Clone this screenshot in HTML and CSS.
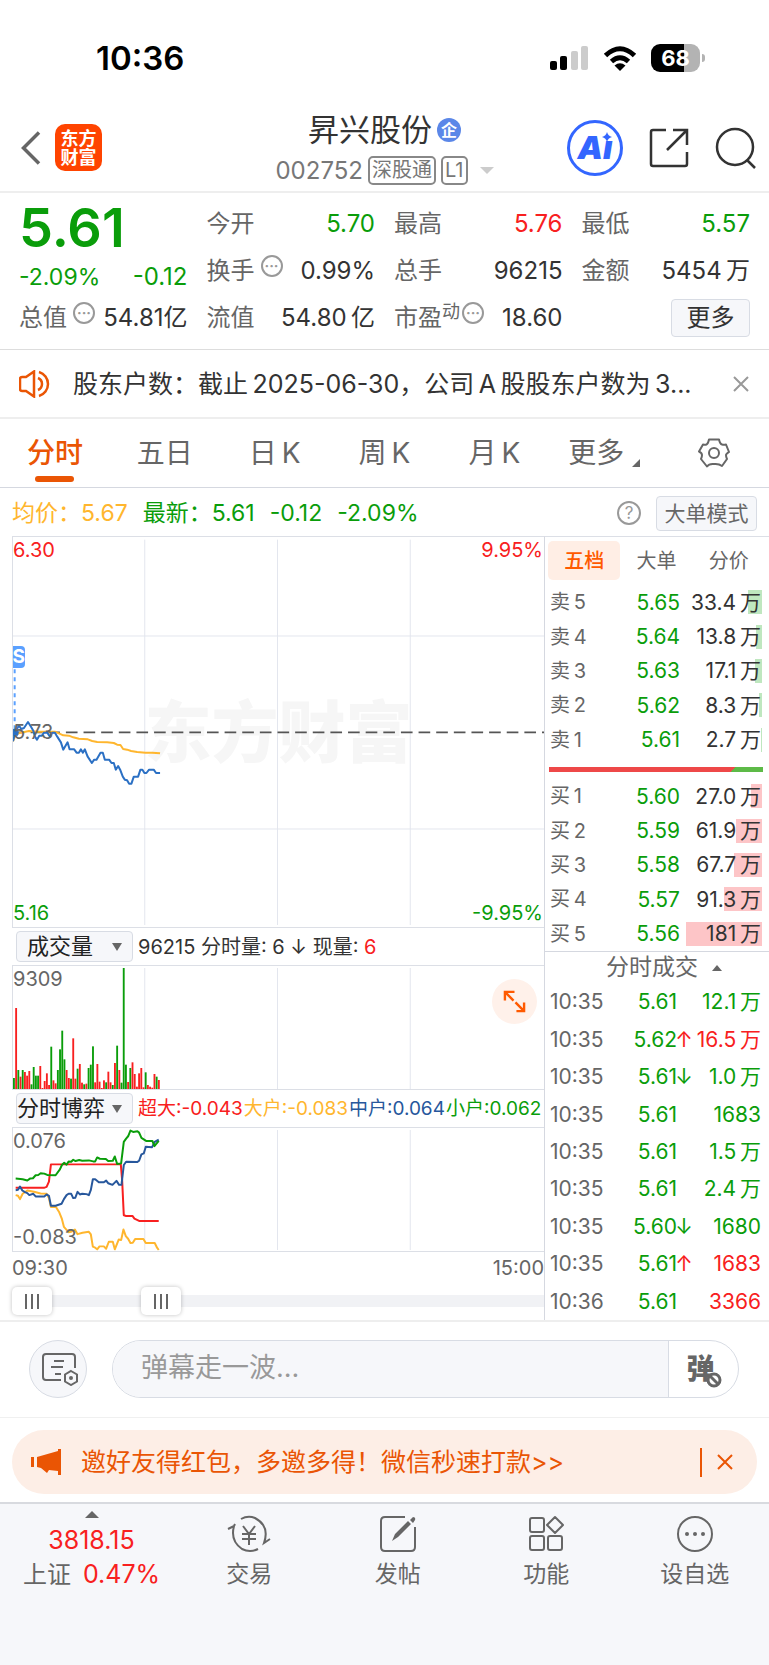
FILE: index.html
```html
<!DOCTYPE html>
<html lang="zh-CN">
<head>
    <meta charset="UTF-8">
    <meta name="viewport" content="width=device-width, initial-scale=1.0">
    <title>昇兴股份 002752</title>
    <link rel="stylesheet" href="styles.css">
</head>
<body>
    <div class="status-bar">
        <span class="clock">10:36</span>
        <div class="status-icons">
            <svg width="39" height="25" viewBox="0 0 39 25">
                <rect x="0" y="15" width="7" height="9" rx="2"/>
                <rect x="10" y="10" width="7" height="14" rx="2"/>
                <rect x="21" y="5" width="7" height="19" rx="2" fill="#ccc"/>
                <rect x="31" y="0" width="7" height="24" rx="2" fill="#ccc"/>
            </svg>
            <svg width="34" height="25" viewBox="0 0 34 25">
                <g fill="none" stroke="#000" stroke-width="5">
                    <path d="M2.5 9.5Q17-4 31.5 9.5"/>
                    <path d="M8.500 15.500Q17 8 25.500 15.500"/>
                </g>
                <path d="M17 25l-5.500-5.500q5.500-4.500 11 0z"/>
            </svg>
            <span class="battery">68</span>
        </div>
    </div>

    <header class="header">
        <div class="header-left">
            <button class="icon-btn" aria-label="返回">
                <svg width="20" height="34" viewBox="0 0 20 34" fill="none" stroke="#666" stroke-width="3.500"><path d="M18 1.500L2.500 17 18 32.500"/></svg>
            </button>
            <a class="logo" href="#">东方<br>财富</a>
        </div>
        <div class="title">
            <h1>昇兴股份<span class="badge">企</span></h1>
            <p>002752<span class="tag">深股通</span><span class="tag">L1</span><i class="caret-down"></i></p>
        </div>
        <div class="header-right">
            <button class="icon-btn ai" aria-label="Ai">
                <span>Aı</span>
                <svg class="spark" width="10" height="10" viewBox="0 0 10 10" fill="#3366ff"><path d="M5 0Q6 4 10 5Q6 6 5 10Q4 6 0 5Q4 4 5 0z"/></svg>
            </button>
            <button class="icon-btn" aria-label="分享">
                <svg width="40" height="40" viewBox="0 0 40 40" fill="none" stroke="#333" stroke-width="2.500"><path d="M17 2H4Q2 2 2 4V36Q2 38 4 38H36Q38 38 38 36V24M24 2H38V17M38 2L18 22"/></svg>
            </button>
            <button class="icon-btn" aria-label="搜索">
                <svg width="42" height="42" viewBox="0 0 42 42" fill="none" stroke="#333" stroke-width="2.500"><circle cx="20" cy="20" r="18"/><path d="M32 33l8 8"/></svg>
            </button>
        </div>
    </header>

    <section class="quote">
        <div class="quote-col">
            <div class="price">5.61</div>
            <div class="change"><span>-2.09%</span><b>-0.12</b></div>
            <div class="cell"><label>总值<i class="dots">···</i></label><b>54.81亿</b></div>
        </div>
        <div class="quote-col">
            <div class="cell"><label>今开</label><b class="green">5.70</b></div>
            <div class="cell"><label>换手<i class="dots">···</i></label><b>0.99%</b></div>
            <div class="cell"><label>流值</label><b>54.80&thinsp;亿</b></div>
        </div>
        <div class="quote-col">
            <div class="cell"><label>最高</label><b class="red">5.76</b></div>
            <div class="cell"><label>总手</label><b>96215</b></div>
            <div class="cell"><label>市盈<sup>动</sup><i class="dots">···</i></label><b>18.60</b></div>
        </div>
        <div class="quote-col">
            <div class="cell"><label>最低</label><b class="green">5.57</b></div>
            <div class="cell"><label>金额</label><b>5454&thinsp;万</b></div>
            <div class="cell end"><button class="more-btn">更多</button></div>
        </div>
    </section>

    <div class="news">
        <svg width="34" height="28" viewBox="0 0 34 28" fill="none" stroke="#ea5504" stroke-width="2.500"><path d="M15 1.500V26.500L7 21H3Q1 21 1 19V9Q1 7 3 7H7zM19 8a6.500 6.500 0 0 1 0 12M20 2a12.500 12.500 0 0 1 0 24"/></svg>
        <a href="#">股东户数：截止&thinsp;2025-06-30，公司&thinsp;A&thinsp;股股东户数为&thinsp;3...</a>
        <button class="icon-btn" aria-label="关闭">
            <svg width="16" height="16" viewBox="0 0 16 16" stroke="#999" stroke-width="2"><path d="M1 1l14 14M15 1L1 15"/></svg>
        </button>
    </div>

    <nav class="tabs">
        <button class="active">分时</button>
        <button>五日</button>
        <button>日&thinsp;K</button>
        <button>周&thinsp;K</button>
        <button>月&thinsp;K</button>
        <button>更多<i class="corner"></i></button>
        <button aria-label="设置">
            <svg width="32" height="30" viewBox="0 0 32 30" fill="none" stroke="#666" stroke-width="2" stroke-linejoin="round"><path d="M11 1.500H21Q22 6 24 6.500Q26 7 28 6.500L31 14Q28 16 28 17Q28 19 29 21L24 28Q21 25.500 16 26Q11 25.500 9 28.500L3 21Q4 19 4 17Q4 15 1 13.500L5 6.500Q7 7 8.500 6.500Q10 6 11 1.500z"/><circle cx="16" cy="15" r="5"/></svg>
        </button>
    </nav>

    <div class="info">
        <span class="orange">均价：5.67</span>
        <span class="green">最新：5.61</span>
        <span class="green">-0.12</span>
        <span class="green">-2.09%</span>
        <button class="help">?</button>
        <button class="mode">大单模式</button>
    </div>

    <main class="main">
        <section class="charts">
            <div class="chart price-chart">
                <div class="watermark">东方财富</div>
                <svg viewBox="0 0 1596 1170" preserveAspectRatio="none" fill="none">
                    <path stroke="#e3e6ee" stroke-width="3" d="M396 8V1164M795 8V1164M1194 8V1164M0 297H1596M0 876H1596"/>
                    <path stroke="#5aa0ff" stroke-width="6" stroke-dasharray="12 12" d="M5 397V580"/>
                    <path stroke="#555" stroke-width="5" stroke-dasharray="35 18" d="M0 586H1596"/>
                    <g transform="translate(-37 -19)" stroke-width="6" stroke-linejoin="round">
                        <polyline stroke="#ffb62e" points="37,632 45,612 60,606 85,601 110,603 163,603 175,608 188,614 205,615 218,620 235,624 262,626 275,631 290,634 320,635 340,637 350,642 360,643 368,655 380,657 392,661 410,664 435,666 455,666 479,668"/>
                        <polyline stroke="#2b70c4" points="37,632 45,600 55,585 62,595 70,592 82,574 92,590 98,600 103,618 109,627 116,615 124,615 130,606 140,606 148,618 155,606 163,606 170,618 181,635 188,657 201,635 207,656 221,656 228,666 235,666 241,656 247,666 253,656 261,677 274,697 281,687 288,687 300,666 307,666 313,687 326,687 333,697 340,697 346,717 353,706 359,717 367,738 373,747 380,749 386,759 393,759 400,738 413,738 420,717 426,717 432,727 438,727 446,717 460,717 467,727 479,727"/>
                        <circle cx="42" cy="606" r="12" fill="#2b70c4"/>
                    </g>
                </svg>
                <span class="sell-mark">S</span>
                <span class="label top-left red">6.30</span>
                <span class="label top-right red">9.95%</span>
                <span class="label mid-left">5.73</span>
                <span class="label bottom-left green">5.16</span>
                <span class="label bottom-right green">-9.95%</span>
            </div>

            <div class="sub-head">
                <select aria-label="指标一"><option>成交量</option></select>
                <p class="total">96215 分时量: 6 ↓ 现量: <span class="red">6</span></p>
            </div>
            <div class="chart sub-chart">
                <svg viewBox="0 0 1596 369" preserveAspectRatio="none">
                    <path stroke="#e3e6ee" stroke-width="3" d="M396 6V369M795 6V369M1194 6V369"/>
                    <g id="volume"></g>
                </svg>
                <span class="label top-left">9309</span>
                <button class="expand" aria-label="放大">
                    <svg width="24" height="24" viewBox="0 0 24 24" fill="none" stroke="#ff5a00" stroke-width="2.500"><path d="M2 11V2H12M2 2l9 9M14 22H22V13M22 22l-9-9"/></svg>
                </button>
            </div>

            <div class="sub-head">
                <select class="wide" aria-label="指标二"><option>分时博弈</option></select>
                <p class="flows"><span class="red">超大:-0.043</span><span class="orange">大户:-0.083</span><span class="blue">中户:0.064</span><span class="green">小户:0.062</span></p>
            </div>
            <div class="chart sub-chart">
                <svg viewBox="0 0 1596 372" preserveAspectRatio="none" fill="none">
                    <path stroke="#e3e6ee" stroke-width="3" d="M396 6V369M795 6V369M1194 6V369"/>
                    <g transform="translate(-37 -623)" stroke-width="6" stroke-linejoin="round">
                        <polyline stroke="#ffb62e" points="45,826 52,828 58,838 66,822 80,812 100,816 120,821 138,822 145,835 151,862 166,862 176,878 184,898 190,922 204,938 211,937 223,930 231,944 246,940 265,937 271,945 277,982 284,985 290,990 297,981 310,981 317,988 325,967 337,967 343,990 355,960 362,962 369,930 376,950 383,958 390,971 397,970 404,959 429,959 436,971 463,971 470,985 475,992"/>
                        <polyline stroke="#f82020" points="45,804 130,804 138,801 145,785 151,733 361,733 365,780 370,887 377,889 396,889 402,897 416,904 475,904"/>
                        <polyline stroke="#27579c" points="45,811 52,810 58,800 65,812 73,817 80,820 86,826 98,822 105,830 131,830 138,824 145,828 151,858 165,858 183,852 190,838 198,826 204,822 212,822 218,835 224,834 231,816 238,824 245,822 258,823 265,826 271,810 277,778 284,778 295,787 310,787 317,782 323,790 336,795 348,783 356,795 363,795 370,735 377,725 410,726 416,722 423,703 430,700 436,680 455,681 463,665 475,658"/>
                        <polyline stroke="#0a9d0a" points="45,776 66,778 80,782 88,776 97,775 105,766 113,765 120,760 131,761 140,765 165,766 178,748 184,735 191,728 198,734 204,724 212,725 218,719 225,723 236,720 245,722 265,721 278,724 284,724 290,712 298,716 316,717 323,723 337,722 343,709 350,732 362,730 370,665 377,655 383,648 390,631 398,635 411,633 416,637 423,653 437,662 456,662 462,678 475,662"/>
                    </g>
                </svg>
                <span class="label top-left">0.076</span>
                <span class="label bottom-left">-0.083</span>
            </div>
            <div class="times"><span>09:30</span><span>15:00</span></div>
            <div class="slider">
                <input type="range" min="0" max="1000" value="0" aria-label="开始时间">
                <input type="range" min="0" max="1000" value="262" aria-label="结束时间">
            </div>
        </section>

        <aside class="book">
            <div class="book-tabs">
                <button class="active">五档</button>
                <button>大单</button>
                <button>分价</button>
            </div>
            <table class="levels sell">
                <tr><th>卖&thinsp;5</th><td>5.65</td><td style="--w: 14px">33.4&thinsp;万</td></tr>
                <tr><th>卖&thinsp;4</th><td>5.64</td><td style="--w: 6px">13.8&thinsp;万</td></tr>
                <tr><th>卖&thinsp;3</th><td>5.63</td><td style="--w: 7px">17.1&thinsp;万</td></tr>
                <tr><th>卖&thinsp;2</th><td>5.62</td><td style="--w: 3px">8.3&thinsp;万</td></tr>
                <tr><th>卖&thinsp;1</th><td>5.61</td><td style="--w: 1px">2.7&thinsp;万</td></tr>
            </table>
            <div class="ratio"></div>
            <table class="levels buy">
                <tr><th>买&thinsp;1</th><td>5.60</td><td style="--w: 11px">27.0&thinsp;万</td></tr>
                <tr><th>买&thinsp;2</th><td>5.59</td><td style="--w: 26px">61.9&thinsp;万</td></tr>
                <tr><th>买&thinsp;3</th><td>5.58</td><td style="--w: 28px">67.7&thinsp;万</td></tr>
                <tr><th>买&thinsp;4</th><td>5.57</td><td style="--w: 38px">91.3&thinsp;万</td></tr>
                <tr><th>买&thinsp;5</th><td>5.56</td><td style="--w: 76px">181&thinsp;万</td></tr>
            </table>
            <button class="ticks-head">分时成交<i class="caret-up"></i></button>
            <table class="ticks">
                <tr><th>10:35</th><td>5.61</td><td></td><td class="green">12.1&thinsp;万</td></tr>
                <tr><th>10:35</th><td>5.62</td><td class="red">↑</td><td class="red">16.5&thinsp;万</td></tr>
                <tr><th>10:35</th><td>5.61</td><td class="green">↓</td><td class="green">1.0&thinsp;万</td></tr>
                <tr><th>10:35</th><td>5.61</td><td></td><td class="green">1683</td></tr>
                <tr><th>10:35</th><td>5.61</td><td></td><td class="green">1.5&thinsp;万</td></tr>
                <tr><th>10:35</th><td>5.61</td><td></td><td class="green">2.4&thinsp;万</td></tr>
                <tr><th>10:35</th><td>5.60</td><td class="green">↓</td><td class="green">1680</td></tr>
                <tr><th>10:35</th><td>5.61</td><td class="red">↑</td><td class="red">1683</td></tr>
                <tr><th>10:36</th><td>5.61</td><td></td><td class="red">3366</td></tr>
            </table>
        </aside>
    </main>

    <div class="comment">
        <button class="round" aria-label="弹幕设置">
            <svg width="38" height="34" viewBox="0 0 38 34" fill="none" stroke="#666" stroke-width="2"><path d="M20 28H5Q2 28 2 25V5Q2 2 5 2H31Q34 2 34 5V16M13 9H23M10 15H22M14 22H20"/><path d="M30 19l6 3.500v7L30 33l-6-3.500v-7z"/><circle cx="30" cy="26" r="1" fill="#666"/></svg>
        </button>
        <div class="field">
            <input type="text" placeholder="弹幕走一波..." aria-label="弹幕">
            <button class="danmu">弹
                <svg class="ban" width="16" height="16" viewBox="0 0 16 16" fill="#fff" stroke="#666" stroke-width="3"><circle cx="8" cy="8" r="6"/><path d="M4 4l8 8"/></svg>
            </button>
        </div>
    </div>

    <div class="promo-wrap">
        <div class="promo">
            <svg width="30" height="26" viewBox="0 0 30 26" fill="#ea5504"><path d="M0 8H3V18H0zM6 8L27 2V0H30V26H27V22L18 21L16 24L10 19L6 18z"/></svg>
            <a href="#">邀好友得红包，多邀多得！微信秒速打款&gt;&gt;</a>
            <button class="icon-btn" aria-label="关闭">
                <svg width="16" height="16" viewBox="0 0 16 16" stroke="#ea5504" stroke-width="2"><path d="M1 1l14 14M15 1L1 15"/></svg>
            </button>
        </div>
    </div>

    <footer class="toolbar">
        <a class="index" href="#">
            <i class="caret-up"></i>
            <em class="red">3818.15</em>
            <span>上证<em class="red">0.47%</em></span>
        </a>
        <a href="#">
            <svg width="44" height="38" viewBox="0 0 44 38" fill="none" stroke="#666" stroke-width="2"><path d="M14 4Q21 0 28 3Q43 11 37 28L43 24M31 34Q23 38 15 34Q3 26 7 11L1 14M7 11L8 9M16 11l6 8 6-8M22 19V30M15 19H29M15 24H29"/></svg>
            交易
        </a>
        <a href="#">
            <svg width="38" height="38" viewBox="0 0 38 38" fill="none" stroke="#666" stroke-width="2"><path d="M26 2H6Q2 2 2 6V32Q2 36 6 36H32Q36 36 36 32V12"/><path stroke="none" fill="#666" d="M13 26l3-7L29 6l3 3L19 22zM31 5l3-3q3 0 2 3l-2 3z"/></svg>
            发帖
        </a>
        <a href="#">
            <svg width="36" height="38" viewBox="0 0 36 38" fill="none" stroke="#666" stroke-width="2"><rect x="2" y="3" width="14" height="14" rx="2"/><rect x="2" y="21" width="14" height="14" rx="2"/><rect x="20" y="21" width="14" height="14" rx="2"/><path stroke-linejoin="round" d="M27 2l8 8-8 8-8-8z"/></svg>
            功能
        </a>
        <a href="#">
            <svg width="38" height="38" viewBox="0 0 38 38" fill="none" stroke="#666" stroke-width="2"><circle cx="19" cy="19" r="17"/><g fill="#666" stroke="none"><circle cx="11" cy="19" r="2"/><circle cx="19" cy="19" r="2"/><circle cx="27" cy="19" r="2"/></g></svg>
            设自选
        </a>
    </footer>

    <script src="script.js"></script>
</body>
</html>
```

FILE: styles.css
```css
* {
    box-sizing: border-box;
}

body {
    margin: 0;
    min-height: 100vh;
    display: flex;
    flex-direction: column;
    background-color: #fff;
    color: #333;
    font-family: Inter, "Noto Sans CJK SC", sans-serif;
    font-size: 24px;
    line-height: 1;
    text-autospace: no-autospace;
}

h1, p {
    margin: 0;
    font-weight: 400;
}

button {
    padding: 0;
    border: none;
    background: none;
    color: inherit;
    font: inherit;
    cursor: pointer;
}

a {
    color: inherit;
    text-decoration: none;
}

i, em {
    font-style: normal;
}

svg {
    display: block;
    flex-shrink: 0;
}

.green { color: #0a9d0a; }
.red { color: #f82020; }
.orange { color: #ffb62e; }
.blue { color: #27579c; }

/* status bar */
.status-bar {
    height: 104px;
    padding: 12px 64px 0 96px;
    display: flex;
    justify-content: space-between;
    align-items: center;
}

.clock {
    color: #000;
    font-size: 33px;
    font-weight: 600;
}

.status-icons {
    display: flex;
    align-items: center;
    gap: 14px;
}

.battery {
    position: relative;
    width: 49px;
    margin-right: 5px;
    border-radius: 9px;
    background: linear-gradient(90deg, #000 68%, #b3b3b3 68%);
    color: #fff;
    font-size: 22px;
    font-weight: 700;
    line-height: 28px;
    text-align: center;
}

.battery::after {
    content: "";
    position: absolute;
    left: 51px;
    top: 10px;
    width: 3px;
    height: 8px;
    border-radius: 0 3px 3px 0;
    background-color: #b3b3b3;
}

/* header */
.icon-btn {
    display: flex;
    align-items: center;
    justify-content: center;
}

.header {
    height: 89px;
    padding: 0 12px;
    display: grid;
    grid-template-columns: 1fr auto 1fr;
    align-items: center;
    border-bottom: 2px solid #eee;
}

.header-left, .header-right {
    display: flex;
    align-items: center;
}

.header-left {
    padding-left: 9px;
    gap: 14px;
}

.header-right {
    justify-content: flex-end;
    gap: 26px;
}

.logo {
    width: 47px;
    height: 47px;
    padding-top: 5px;
    border-radius: 10px;
    background-color: #ff4400;
    color: #fff;
    font-size: 18px;
    font-weight: 700;
    line-height: 19px;
    text-align: center;
}

.title {
    padding-top: 4px;
    display: flex;
    flex-direction: column;
    align-items: center;
    gap: 11px;
}

.title h1 {
    display: flex;
    align-items: center;
    gap: 5px;
    font-size: 31px;
}

.badge {
    width: 24px;
    border-radius: 50%;
    background-color: #5b87e8;
    color: #fff;
    font-size: 16px;
    font-weight: 700;
    line-height: 24px;
    text-align: center;
}

.title p {
    display: flex;
    align-items: center;
    color: #777;
    font-size: 24px;
}

.tag {
    margin-left: 5px;
    padding: 0 2px;
    border: 2px solid #888;
    border-radius: 5px;
    font-size: 20px;
    line-height: 25px;
}

.caret-down {
    margin-left: 12px;
    border: 7px solid transparent;
    border-top-color: #ccc;
    border-bottom: none;
}

.ai {
    position: relative;
    width: 56px;
    height: 56px;
    border: 3px solid #3366ff;
    border-radius: 50%;
    color: #3366ff;
    font-size: 32px;
    font-weight: 900;
    font-style: italic;
}

.spark {
    position: absolute;
    right: 8px;
    top: 9px;
}

/* quote */
.quote {
    padding: 7px 19px 8px;
    display: grid;
    grid-template-columns: repeat(4, 1fr);
    gap: 19px;
    border-bottom: 1px solid #ddd;
}

.quote-col {
    min-width: 0;
}

.quote-col b {
    font-weight: 400;
}

.price {
    color: #0a9d0a;
    font-size: 54px;
    font-weight: 600;
    line-height: 56px;
}

.change {
    height: 38px;
    padding-top: 4px;
    display: flex;
    justify-content: space-between;
    align-items: center;
    color: #0a9d0a;
    font-size: 23px;
}

.change b {
    font-size: 24px;
}

.cell {
    height: 47px;
    display: flex;
    justify-content: space-between;
    align-items: center;
    white-space: nowrap;
}

.cell label {
    display: flex;
    color: #666;
}

.cell sup {
    font-size: 18px;
    line-height: 12px;
}

.cell.end {
    justify-content: flex-end;
}

.dots {
    width: 22px;
    height: 22px;
    margin: -4px 0 0 6px;
    border: 2px solid #999;
    border-radius: 50%;
    color: #999;
    font-size: 14px;
    font-weight: 700;
    line-height: 17px;
    text-align: center;
}

.cell sup + .dots {
    margin-left: 2px;
}

.more-btn {
    width: 79px;
    height: 38px;
    border: 1px solid #d8dce4;
    border-radius: 4px;
    background-color: #f6f7fa;
}

/* news */
.news {
    height: 69px;
    padding: 0 20px 0 19px;
    display: flex;
    align-items: center;
    gap: 20px;
    border-bottom: 2px solid #eee;
}

.news a {
    flex: 1;
    overflow: hidden;
    font-size: 25px;
    line-height: 36px;
    white-space: nowrap;
}

/* period tabs */
.tabs {
    height: 69px;
    display: grid;
    grid-template-columns: repeat(7, 1fr);
    border-bottom: 1px solid #d5d8e0;
    color: #666;
    font-size: 28px;
}

.tabs button {
    position: relative;
    display: flex;
    align-items: center;
    justify-content: center;
}

.tabs .active {
    color: #ea5504;
    font-weight: 500;
}

.tabs .active::after {
    content: "";
    position: absolute;
    bottom: 5px;
    width: 39px;
    height: 6px;
    border-radius: 3px;
    background-color: #ea5504;
}

.corner {
    margin: 20px 0 0 8px;
    border: 4px solid #666;
    border-top-color: transparent;
    border-left-color: transparent;
}

/* info row */
.info {
    height: 48px;
    padding: 2px 12px 0;
    display: flex;
    align-items: center;
    gap: 15px;
    font-size: 23px;
}

.help {
    width: 24px;
    height: 24px;
    margin-left: auto;
    border: 2px solid #999;
    border-radius: 50%;
    color: #999;
    font-size: 17px;
}

.mode {
    width: 101px;
    height: 35px;
    border: 1px solid #d8dce4;
    border-radius: 4px;
    background-color: #f6f7fa;
    color: #666;
    font-size: 21px;
}

/* charts */
.main {
    display: grid;
    grid-template-columns: minmax(0, 1fr) 225px;
    border-bottom: 2px solid #eee;
}

.charts {
    padding-left: 12px;
}

.chart {
    position: relative;
    border: 1px solid #dcdfe6;
    border-right: none;
}

.chart svg {
    width: 100%;
    height: 100%;
}

.price-chart {
    height: 392px;
}

.sub-chart {
    height: 125px;
}

.watermark {
    position: absolute;
    inset: 0;
    display: flex;
    align-items: center;
    justify-content: center;
    color: #f6f6f6;
    font-size: 67px;
    font-weight: 900;
}

.price-chart svg {
    position: relative;
}

.label {
    position: absolute;
    color: #666;
    font-size: 20px;
}

.label.red { color: #f82020; }
.label.green { color: #0a9d0a; }
.top-left { left: 0; top: 3px; }
.top-right { right: 1px; top: 3px; }
.mid-left { left: 0; top: 185px; }
.bottom-left { left: 0; bottom: 4px; }
.bottom-right { right: 1px; bottom: 4px; }

.sell-mark {
    position: absolute;
    left: 0;
    top: 109px;
    width: 12px;
    overflow: hidden;
    border-radius: 0 4px 4px 0;
    background-color: #5aa0ff;
    color: #fff;
    font-size: 19px;
    font-weight: 700;
    line-height: 22px;
    direction: rtl;
}

.sub-head {
    height: 37px;
    padding-left: 4px;
    display: flex;
    align-items: center;
    gap: 5px;
    white-space: nowrap;
}

.sub-head select {
    width: 117px;
    height: 31px;
    padding: 0 0 0 10px;
    flex-shrink: 0;
    appearance: none;
    border: 1px solid #d8dce4;
    border-radius: 4px;
    background: #f6f7fa url('data:image/svg+xml,<svg xmlns="http://www.w3.org/2000/svg" width="10" height="8"><path d="M0 0H10L5 8z" fill="%23666"/></svg>') no-repeat right 10px center;
    color: #222;
    font: inherit;
    font-size: 22px;
    line-height: 29px;
}

.sub-head select.wide {
    padding-left: 0;
}

.total {
    font-size: 20px;
}

.flows {
    display: flex;
    gap: 1px;
    font-size: 19px;
}

.expand {
    position: absolute;
    right: 7px;
    top: 13px;
    width: 45px;
    height: 45px;
    padding: 11px;
    border-radius: 50%;
    background-color: #fff1ea;
}

.times {
    height: 31px;
    display: flex;
    justify-content: space-between;
    align-items: center;
    color: #666;
    font-size: 20px;
}

.slider {
    position: relative;
    height: 36px;
    background: linear-gradient(#f1f2f5, #f1f2f5) center / 100% 12px no-repeat;
}

.slider input {
    position: absolute;
    left: 0;
    top: 4px;
    width: 100%;
    height: 28px;
    margin: 0;
    appearance: none;
    background: none;
    pointer-events: none;
}

.slider input::-webkit-slider-thumb {
    appearance: none;
    width: 40px;
    height: 28px;
    border-radius: 5px;
    background:
        linear-gradient(#666, #666) 13px center / 2px 15px no-repeat,
        linear-gradient(#666, #666) 19px center / 2px 15px no-repeat,
        linear-gradient(#666, #666) 25px center / 2px 15px no-repeat,
        #fff;
    box-shadow: 0 0 4px rgba(0, 0, 0, 0.25);
    pointer-events: auto;
}

/* order book */
.book {
    border-top: 1px solid #dcdfe6;
    border-left: 1px solid #d5d8e0;
}

.book-tabs {
    padding: 4px 4px 5px 3px;
    display: grid;
    grid-template-columns: repeat(3, 1fr);
    color: #666;
    font-size: 20px;
}

.book-tabs button {
    height: 39px;
    border-radius: 5px;
}

.book-tabs .active {
    background-color: #ffeee5;
    color: #ff5a00;
    font-weight: 500;
}

table {
    width: 100%;
    border-collapse: collapse;
    table-layout: fixed;
    font-size: 21px;
}

th, td {
    padding: 0;
    font-weight: 400;
    text-align: right;
    white-space: nowrap;
}

th {
    padding-left: 5px;
    color: #666;
    text-align: left;
}

.levels {
    height: 172px;
}

.levels th {
    width: 62px;
    font-size: 20px;
}

.levels td:nth-child(2) {
    width: 73px;
    color: #0a9d0a;
}

.levels td:last-child {
    padding-right: 8px;
    background: linear-gradient(var(--bar), var(--bar)) right 7px center / var(--w) 24px no-repeat;
}

.sell { --bar: #bfe7bf; }
.buy { --bar: #fdc5c7; }

.ratio {
    height: 5px;
    margin: 10px 6px 7px 4px;
    background: linear-gradient(135deg, #ee4848 85%, #5dba47 85%);
}

.ticks-head {
    width: 100%;
    height: 32px;
    padding-left: 14px;
    display: flex;
    align-items: center;
    justify-content: center;
    border-top: 1px solid #d5d8e0;
    color: #666;
    font-size: 23px;
}

.caret-up {
    margin-left: 14px;
    border: 5px solid transparent;
    border-bottom: 6px solid #666;
    border-top: none;
}

.ticks {
    height: 337px;
}

.ticks th {
    width: 65px;
}

.ticks td:nth-child(2) {
    width: 67px;
    color: #0a9d0a;
}

.ticks td:nth-child(3) {
    width: 16px;
    text-align: center;
    text-indent: -2px;
}

.ticks td:last-child {
    padding-right: 8px;
}

/* comment bar */
.comment {
    padding: 18px 30px 19px 29px;
    display: flex;
    gap: 25px;
    border-bottom: 1px solid #f0f0f0;
}

.round {
    width: 58px;
    height: 58px;
    padding-left: 11px;
    flex-shrink: 0;
    border: 1px solid #d8dce4;
    border-radius: 50%;
    background-color: #f6f7fa;
}

.field {
    flex: 1;
    display: flex;
    overflow: hidden;
    border: 1px solid #d8dce4;
    border-radius: 29px;
}

.field input {
    flex: 1;
    min-width: 0;
    padding: 0 28px 4px;
    border: none;
    border-right: 1px solid #d8dce4;
    background-color: #f6f7fa;
    font: inherit;
    font-size: 27px;
}

.field input::placeholder {
    color: #999;
}

.danmu {
    position: relative;
    width: 69px;
    padding-right: 6px;
    color: #666;
    font-size: 28px;
    font-weight: 900;
}

.ban {
    position: absolute;
    right: 16px;
    bottom: 9px;
}

/* promo */
.promo-wrap {
    padding: 12px 12px 8px;
}

.promo {
    height: 64px;
    padding: 0 24px 0 19px;
    display: flex;
    align-items: center;
    border-radius: 32px;
    background-color: #fdeee6;
    color: #ea5504;
    font-size: 25px;
}

.promo a {
    flex: 1;
    padding-left: 20px;
    white-space: nowrap;
}

.promo .icon-btn {
    height: 29px;
    padding-left: 15px;
    border-left: 2px solid #ea5504;
}

/* bottom toolbar */
.toolbar {
    flex: 1;
    min-height: 160px;
    display: grid;
    grid-template-columns: 175px repeat(4, 1fr);
    align-items: start;
    border-top: 2px solid #d8dadf;
    background-color: #f6f7fa;
    color: #666;
    font-size: 23px;
}

.toolbar a {
    padding-top: 11px;
    display: flex;
    flex-direction: column;
    align-items: center;
    gap: 10px;
}

.toolbar .index {
    padding: 7px 0 0 8px;
    gap: 9px;
    font-size: 24px;
}

.index em {
    font-size: 25px;
}

.index span em {
    margin-left: 12px;
}

.toolbar .caret-up {
    margin: 0 0 1px;
    border-width: 7px;
}
```

FILE: script.js
```js
// minute volumes, r = up, g = down
const volumes = 'g33 r243 g57 r37 g57 r51 r40 r54 g14 g66 g40 g40 r69 r3 r24 r47 r12 g127 r26 r17 g57 g119 g175 g89 r57 r33 g31 r152 r31 g61 r75 r19 g14 r16 g63 g73 g128 r20 r75 r22 r3 r26 g20 r52 r20 g12 r78 g130 r57 g19 g363 g73 r21 g63 r80 r45 r7 r47 r63 r5 g50 r12 r7 r4 r45 g37 r27';
const group = document.getElementById('volume');

volumes.split(' ').forEach((item, i) => {
    const value = Number(item.slice(1));
    const bar = document.createElementNS('http://www.w3.org/2000/svg', 'rect');
    bar.setAttribute('x', i * 6.6);
    bar.setAttribute('y', 369 - value);
    bar.setAttribute('width', 5.6);
    bar.setAttribute('height', value);
    bar.setAttribute('fill', item[0] === 'r' ? '#f82020' : '#0a9d0a');
    group.appendChild(bar);
});
```
